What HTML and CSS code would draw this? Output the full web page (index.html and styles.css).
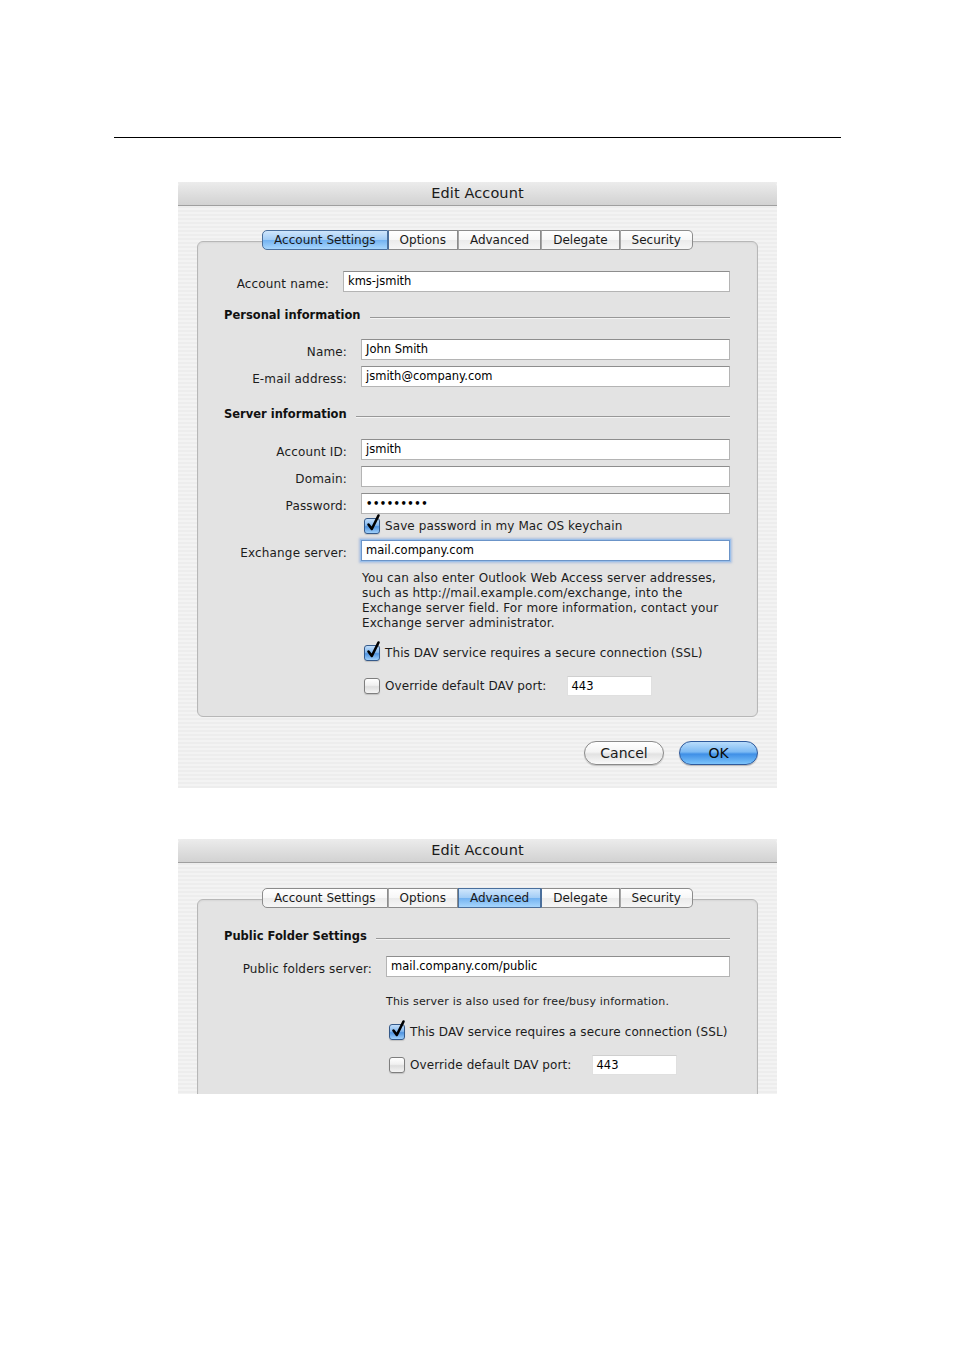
FILE: index.html
```html
<!DOCTYPE html>
<html>
<head>
<meta charset="utf-8">
<title>Edit Account</title>
<link rel="stylesheet" href="styles.css">
</head>
<body>
<div class="rule"></div>

<section class="dialog d1">
  <header class="titlebar">Edit Account</header>
  <div class="body">
    <nav class="tabs">
      <span class="tab active">Account Settings</span>
      <span class="tab">Options</span>
      <span class="tab">Advanced</span>
      <span class="tab">Delegate</span>
      <span class="tab">Security</span>
    </nav>
    <div class="tabbox box1">
      <div class="row">
        <span class="lbl lw131">Account name:</span>
        <span class="field fw387">kms-jsmith</span>
      </div>
      <div class="section s-personal"><span class="stitle">Personal information</span><span class="sline"></span></div>
      <div class="row mt17">
        <span class="lbl lw149">Name:</span>
        <span class="field fw369">John Smith</span>
      </div>
      <div class="row mt6">
        <span class="lbl lw149">E-mail address:</span>
        <span class="field fw369">jsmith@company.com</span>
      </div>
      <div class="section s-server"><span class="stitle">Server information</span><span class="sline"></span></div>
      <div class="row mt18">
        <span class="lbl lw149">Account ID:</span>
        <span class="field fw369">jsmith</span>
      </div>
      <div class="row mt6">
        <span class="lbl lw149">Domain:</span>
        <span class="field fw369"></span>
      </div>
      <div class="row mt6">
        <span class="lbl lw149">Password:</span>
        <span class="field fw369 pw">•••••••••</span>
      </div>
      <div class="check-row cr-keychain">
        <span class="cb on"><svg class="tick" width="16" height="20" viewBox="0 0 16 20"><path d="M3.5 11.5 L6.8 16 L13.5 2.5" fill="none" stroke="#000" stroke-width="2.6" stroke-linecap="round" stroke-linejoin="round"/></svg></span>
        <span class="ctext">Save password in my Mac OS keychain</span>
      </div>
      <div class="row mt6">
        <span class="lbl lw149">Exchange server:</span>
        <span class="field fw369 focus">mail.company.com</span>
      </div>
      <p class="help">You can also enter Outlook Web Access server addresses,<br>such as http://mail.example.com/exchange, into the<br>Exchange server field. For more information, contact your<br>Exchange server administrator.</p>
      <div class="check-row cr-ssl1">
        <span class="cb on"><svg class="tick" width="16" height="20" viewBox="0 0 16 20"><path d="M3.5 11.5 L6.8 16 L13.5 2.5" fill="none" stroke="#000" stroke-width="2.6" stroke-linecap="round" stroke-linejoin="round"/></svg></span>
        <span class="ctext">This DAV service requires a secure connection (SSL)</span>
      </div>
      <div class="check-row cr-port1">
        <span class="cb"></span>
        <span class="ctext">Override default DAV port:</span>
        <span class="field port">443</span>
      </div>
    </div>
    <div class="buttons">
      <span class="btn cancel">Cancel</span>
      <span class="btn ok">OK</span>
    </div>
  </div>
</section>

<section class="dialog d2">
  <header class="titlebar">Edit Account</header>
  <div class="body body2">
    <nav class="tabs">
      <span class="tab">Account Settings</span>
      <span class="tab">Options</span>
      <span class="tab active">Advanced</span>
      <span class="tab">Delegate</span>
      <span class="tab">Security</span>
    </nav>
    <div class="tabbox box2">
      <div class="section s-public"><span class="stitle">Public Folder Settings</span><span class="sline"></span></div>
      <div class="row mt13">
        <span class="lbl lw174">Public folders server:</span>
        <span class="field fw344">mail.company.com/public</span>
      </div>
      <p class="note">This server is also used for free/busy information.</p>
      <div class="check-row cr-ssl2">
        <span class="cb on"><svg class="tick" width="16" height="20" viewBox="0 0 16 20"><path d="M3.5 11.5 L6.8 16 L13.5 2.5" fill="none" stroke="#000" stroke-width="2.6" stroke-linecap="round" stroke-linejoin="round"/></svg></span>
        <span class="ctext">This DAV service requires a secure connection (SSL)</span>
      </div>
      <div class="check-row cr-port2">
        <span class="cb"></span>
        <span class="ctext">Override default DAV port:</span>
        <span class="field port">443</span>
      </div>
    </div>
  </div>
</section>
</body>
</html>
```

FILE: styles.css
```css
* { box-sizing: border-box; }

body {
  margin: 0;
  background: #fff;
  font-family: "DejaVu Sans", "Liberation Sans", sans-serif;
  font-size: 12px;
  letter-spacing: 0.15px;
  color: #1c1c1c;
}

.rule {
  margin: 137px 0 0 114px;
  width: 727px;
  height: 1px;
  background: #000;
}

.dialog {
  margin-left: 178px;
  width: 599px;
  background: repeating-linear-gradient(180deg, #ededed 0 2px, #f3f3f3 2px 4px);
}

.d1 { margin-top: 44px; }
.d2 { margin-top: 51px; height: 255px; overflow: hidden; }

.titlebar {
  height: 24px;
  line-height: 23px;
  text-align: center;
  font-size: 14.5px;
  letter-spacing: 0.1px;
  color: #1a1a1a;
  background: linear-gradient(180deg, #ececec 0%, #dcdcdc 60%, #d2d2d2 100%);
  border-bottom: 1px solid #9f9f9f;
  border-radius: 5px 5px 0 0;
}

.body { padding: 24px 19px 23px; }
.body2 { padding: 25px 19px 0; }

.tabs {
  display: flex;
  justify-content: center;
  height: 20px;
  position: relative;
  z-index: 1;
}

.tab {
  height: 20px;
  line-height: 18px;
  padding: 0 11px;
  font-size: 12px;
  letter-spacing: 0;
  color: #1a1a1a;
  border: 1px solid #8c8c8c;
  border-left: 1px solid #a6a6a6;
  background: linear-gradient(180deg, #ffffff 0%, #f7f7f7 50%, #ebebeb 51%, #f6f6f6 100%);
}
.tab:first-child { border-left-color: #8c8c8c; border-radius: 5px 0 0 5px; }
.tab:last-child { border-radius: 0 5px 5px 0; }
.tab.active {
  border-color: #4a6f9c;
  background: linear-gradient(180deg, #cfe6fc 0%, #a3cdf6 48%, #74b3f1 52%, #a7d6fd 100%);
}
.tab.active + .tab { border-left-color: #4a6f9c; }

.tabbox {
  margin-top: -9px;
  border: 1px solid #b7b7b7;
  border-radius: 6px;
  background: #e3e3e3;
  box-shadow: inset 0 1px 2px rgba(0,0,0,0.06);
}
.box1 { padding: 29px 0 20px; }
.box2 { padding: 29px 0 60px; }

.row {
  display: flex;
  align-items: center;
  gap: 14px;
}
.mt6 { margin-top: 6px; }
.mt7 { margin-top: 7px; }
.mt13 { margin-top: 13px; }
.mt17 { margin-top: 17px; }
.mt18 { margin-top: 18px; }

.lbl {
  flex: none;
  text-align: right;
  padding-top: 4px;
  color: #1c1c1c;
  white-space: nowrap;
}
.lw131 { width: 131px; }
.lw149 { width: 149px; }
.lw174 { width: 174px; }

.field {
  flex: none;
  height: 21px;
  line-height: 19px;
  padding: 0 4px;
  font-size: 11.5px;
  letter-spacing: 0;
  color: #000;
  background: #fff;
  border: 1px solid #b4b4b4;
  border-top-color: #8d8d8d;
  white-space: nowrap;
}
.fw387 { width: 387px; }
.fw369 { width: 369px; }
.fw344 { width: 344px; }
.pw { letter-spacing: 0.5px; font-size: 10px; font-weight: bold; }
.field.focus {
  border-color: #6b94c8;
  box-shadow: 0 0 0 1px #9cc0ea, 0 0 2px 2px rgba(120,160,220,0.5);
}

.section {
  display: flex;
  align-items: center;
  gap: 9px;
  height: 14px;
  padding: 0 27px 0 26px;
}
.stitle {
  font-weight: bold;
  font-size: 11.5px;
  letter-spacing: 0;
  color: #111;
  white-space: nowrap;
}
.sline {
  flex: 1;
  height: 2px;
  margin-top: 6px;
  border-top: 1px solid #989898;
  border-bottom: 1px solid #f4f4f4;
}
.s-personal { margin-top: 16px; }
.s-server { margin-top: 20px; }

.check-row {
  display: flex;
  align-items: center;
  gap: 5px;
  height: 16px;
}
.cr-keychain { margin-top: 4px; padding-left: 166px; }
.cr-ssl1 { margin-top: 14px; padding-left: 166px; }
.cr-port1 { margin-top: 15px; padding-left: 166px; height: 20px; }
.cr-ssl2 { margin-top: 15px; padding-left: 191px; }
.cr-port2 { margin-top: 15px; padding-left: 191px; height: 20px; }

.cb {
  flex: none;
  position: relative;
  width: 16px;
  height: 16px;
  border-radius: 3px;
  border: 1px solid #7e7e7e;
  background: linear-gradient(180deg, #ffffff 0%, #f0f0f0 45%, #dedede 55%, #f4f4f4 100%);
  box-shadow: 0 1px 1px rgba(0,0,0,0.15);
}
.cb.on {
  border-color: #355a8a;
  background: linear-gradient(180deg, #c2defa 0%, #84b8ee 45%, #4f93df 55%, #9fd0fb 100%);
}
.tick {
  position: absolute;
  left: 0;
  top: -6px;
  overflow: visible;
}

.ctext { white-space: nowrap; color: #1c1c1c; letter-spacing: 0.1px; }

.field.port {
  width: 85px;
  height: 20px;
  margin-left: 15px;
  border-color: #e0e0e0;
  border-top-color: #cfcfcf;
}

.help {
  margin: 10px 0 0 164px;
  font-size: 12px;
  line-height: 15px;
  color: #1c1c1c;
  white-space: nowrap;
}

.note {
  margin: 18px 0 0 188px;
  font-size: 11px;
  letter-spacing: 0.2px;
  line-height: 14px;
  color: #1c1c1c;
}

.buttons {
  display: flex;
  justify-content: flex-end;
  gap: 15px;
  margin-top: 24px;
}
.btn {
  height: 24px;
  line-height: 22px;
  text-align: center;
  font-size: 14px;
  letter-spacing: 0;
  border-radius: 12px;
}
.cancel {
  width: 80px;
  color: #1a1a1a;
  border: 1px solid #8a8a8a;
  background: linear-gradient(180deg, #ffffff 0%, #f4f4f4 45%, #e2e2e2 55%, #fafafa 100%);
  box-shadow: 0 1px 1px rgba(0,0,0,0.2);
}
.ok {
  width: 79px;
  color: #0a0a0a;
  border: 1px solid #2f5a9c;
  background: linear-gradient(180deg, #b9dcfb 0%, #7cbaf4 45%, #3f8fe6 55%, #7cc4fb 100%);
  box-shadow: 0 1px 1px rgba(0,0,0,0.25);
}
```
